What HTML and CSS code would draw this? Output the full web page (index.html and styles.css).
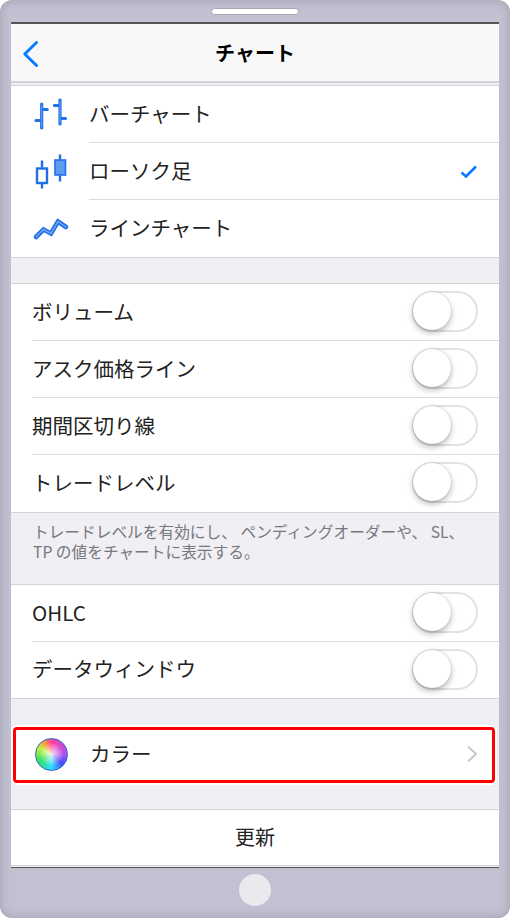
FILE: index.html
```html
<!DOCTYPE html>
<html lang="ja">
<head>
<meta charset="utf-8">
<title>チャート</title>
<link rel="stylesheet" href="styles.css">
</head>
<body>
<div class="phone">
  <div class="speaker"></div>
  <div class="screen">
    <header class="nav">
      <svg class="back" width="20" height="30" viewBox="0 0 20 30"><path d="M14.500 4.500 2.800 16l11.700 11.500" fill="none" stroke="#0a7aff" stroke-width="3" stroke-linecap="round" stroke-linejoin="round"/></svg>
      <h1>チャート</h1>
    </header>
    <section class="group first">
      <div class="row icon-row">
        <svg class="ico" width="36" height="36" viewBox="0 0 36 36"><g fill="none" stroke="#2472e8" stroke-width="3.200" stroke-linecap="round"><path d="M10.700 7v24M10.700 12.500h5.500M10.700 23.500H5"/><path d="M29 3v24M29 8.500h-5.500M29 21.500h5.500"/></g><path d="M10.700 8v22M29 4v22" stroke="#5f9cf0" stroke-width="1" fill="none"/></svg>
        <span class="label">バーチャート</span>
      </div>
      <div class="row icon-row">
        <svg class="ico" width="36" height="36" viewBox="0 0 36 36"><g stroke="#1f6fe6" stroke-width="2.400"><path d="M11 6.500v7M11 29.500v5M29 .500v5M29 21.500v6"/><rect x="6" y="14.500" width="10" height="14.500" fill="#fff"/><rect x="24" y="6" width="10.500" height="15" fill="#5f9cf0" stroke-width="1.600"/></g></svg>
        <span class="label">ローソク足</span>
        <svg class="check" width="20" height="16" viewBox="0 0 20 16"><path d="M2.500 8.500 7 12.500 17 2.500" fill="none" stroke="#0a7aff" stroke-width="2.600"/></svg>
      </div>
      <div class="row icon-row">
        <svg class="ico" width="36" height="36" viewBox="0 0 36 36"><path d="M5 26 12.500 18.500l7.500 4L27 10.500 35 16" fill="none" stroke="#1f6fe6" stroke-width="4.600" stroke-linecap="round"/><path d="M5 26 12.500 18.500l7.500 4L27 10.500 35 16" fill="none" stroke="#6fa6f3" stroke-width="1.500" stroke-linecap="round"/></svg>
        <span class="label">ラインチャート</span>
      </div>
    </section>
    <section class="group gap-a">
      <div class="row"><span class="label">ボリューム</span><span class="toggle"></span></div>
      <div class="row"><span class="label">アスク価格ライン</span><span class="toggle"></span></div>
      <div class="row"><span class="label">期間区切り線</span><span class="toggle"></span></div>
      <div class="row"><span class="label">トレードレベル</span><span class="toggle"></span></div>
    </section>
    <p class="note">トレードレベルを有効にし、 ペンディングオーダーや、 SL、<br>TP の値をチャートに表示する。</p>
    <section class="group">
      <div class="row"><span class="label">OHLC</span><span class="toggle"></span></div>
      <div class="row short"><span class="label">データウィンドウ</span><span class="toggle"></span></div>
    </section>
    <section class="color-row">
      <span class="wheel"></span>
      <span class="label">カラー</span>
      <svg class="chev" width="12" height="18" viewBox="0 0 12 18"><path d="M2 1.500 10 9l-8 7.500" fill="none" stroke="#c7c7cc" stroke-width="2"/></svg>
    </section>
    <section class="group update"><div class="update-row">更新</div></section>
  </div>
  <div class="home"><span class="home-btn"></span></div>
</div>
</body>
</html>
```

FILE: styles.css
```css
* { box-sizing: border-box; }
html, body { margin: 0; padding: 0; }
body { width: 510px; height: 918px; overflow: hidden; background: #fff; font-family: "Noto Sans CJK JP", "Noto Sans", sans-serif; }
.phone {
  position: relative;
  width: 510px; height: 918px;
  border-radius: 12px;
  background: #c2c1d1;
  box-shadow: inset 0 0 10px rgba(130,130,150,.55);
  padding-top: 22px;
}
.speaker {
  position: absolute; left: 211px; top: 8px;
  width: 88px; height: 7px;
  background: #fff; border: 1px solid #a9a9b4; border-radius: 4px;
}
.screen {
  margin: 0 11px;
  width: 488px; height: 846px;
  background: #efeff4;
  border-top: 2px solid #555;
  border-bottom: 1px solid #555;
  overflow: hidden;
}
.nav {
  height: 59px;
  background: #f8f8f8;
  border-bottom: 2px solid #d2d2d6;
  display: flex; align-items: center; justify-content: center;
  position: relative;
}
.nav h1 { margin: 0; font-size: 20px; font-weight: 700; color: #000; }
.back { position: absolute; left: 11px; top: 14px; }
.group { background: #fff; border-top: 1px solid #d4d4d8; border-bottom: 1px solid #d4d4d8; }
.group.first { margin-top: 2px; }
.gap-a { margin-top: 25px; }
.row {
  height: 57px;
  padding-left: 21px;
  padding-bottom: 3px;
  display: flex; align-items: center;
  position: relative;
}
.row.short { height: 56px; }
.row + .row::before {
  content: ""; position: absolute; left: 21px; right: 0; top: -1px;
  height: 1px; background: #dcdcde;
}
.icon-row + .icon-row::before { left: 78px; }
.icon-row { padding-left: 20px; }
.ico { flex: none; margin-right: 22px; overflow: visible; position: relative; top: 1.500px; }
.label { font-size: 20.500px; color: #222; line-height: 1; white-space: nowrap; }
.check { position: absolute; right: 20px; top: 21px; }
.toggle {
  position: absolute; right: 21px; top: 7px;
  width: 66px; height: 41px;
  border: 2px solid #e2e2e2; border-radius: 21px;
  background: #fff;
}
.toggle::after {
  content: ""; position: absolute; left: -1px; top: -1px;
  width: 38px; height: 38px; border-radius: 50%;
  background: #fff;
  box-shadow: 0 3px 6px rgba(0,0,0,.28), 0 0 2px rgba(0,0,0,.18);
}
.note {
  margin: 0; height: 71px;
  padding: 9px 0 0 22px;
  font-size: 15.700px; line-height: 20px; color: #77777c;
  white-space: nowrap;
}
.color-row {
  margin: 28px 4px 0 1.500px; height: 56px;
  background: #fff;
  display: flex; align-items: center;
  padding-left: 19.500px;
  padding-bottom: 1px;
  position: relative;
  border: 3px solid #f00;
  border-radius: 4px;
  box-shadow: 0 0 0 2px #fff;
}
.wheel {
  width: 33px; height: 33px; border-radius: 50%;
  margin-right: 22px; flex: none;
  border: 1.500px solid #1f66c8;
  background:
    radial-gradient(circle, rgba(255,255,255,.85) 0, rgba(255,255,255,0) 55%),
    conic-gradient(#ff3f9f, #b050f0 90deg, #4a4cf5 130deg, #28e0ff 180deg, #30e060 240deg, #c8f040 300deg, #ff8a40 335deg, #ff3f9f);
}
.color-row .label { position: relative; top: -1px; }
.chev { position: absolute; right: 14px; top: 15px; }
.update { margin-top: 26px; height: 57px; }
.update-row { height: 55px; padding-bottom: 2px; display: flex; align-items: center; justify-content: center; font-size: 20px; color: #222; }
.home { height: 50px; padding-bottom: 6px; display: flex; justify-content: center; align-items: center; }
.home-btn { width: 32px; height: 32px; border-radius: 50%; background: #e9e9ee; }
```
